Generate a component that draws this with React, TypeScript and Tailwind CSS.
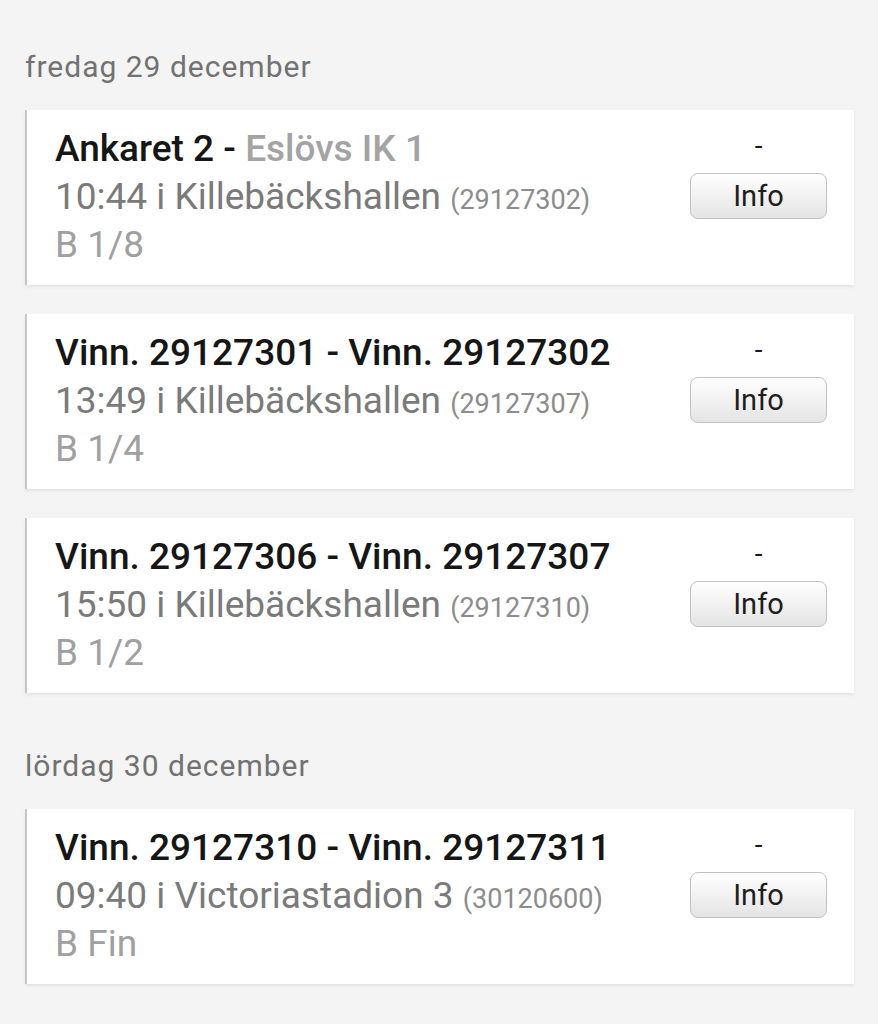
type Match = {
  home: string;
  away: string;
  awayMuted?: boolean;
  time: string;
  venue: string;
  id: string;
  round: string;
};

type Day = {
  label: string;
  matches: Match[];
};

const days: Day[] = [
  {
    label: "fredag 29 december",
    matches: [
      {
        home: "Ankaret 2",
        away: "Eslövs IK 1",
        awayMuted: true,
        time: "10:44",
        venue: "Killebäckshallen",
        id: "29127302",
        round: "B 1/8",
      },
      {
        home: "Vinn. 29127301",
        away: "Vinn. 29127302",
        time: "13:49",
        venue: "Killebäckshallen",
        id: "29127307",
        round: "B 1/4",
      },
      {
        home: "Vinn. 29127306",
        away: "Vinn. 29127307",
        time: "15:50",
        venue: "Killebäckshallen",
        id: "29127310",
        round: "B 1/2",
      },
    ],
  },
  {
    label: "lördag 30 december",
    matches: [
      {
        home: "Vinn. 29127310",
        away: "Vinn. 29127311",
        time: "09:40",
        venue: "Victoriastadion 3",
        id: "30120600",
        round: "B Fin",
      },
    ],
  },
];

function MatchCard({ home, away, awayMuted, time, venue, id, round }: Match) {
  return (
    <div className="flex items-start justify-between bg-white border-l-2 border-[#c6c6c6] shadow-[0_2px_3px_rgba(0,0,0,0.07)] pl-[28px] pr-[27px] pt-[15px] pb-4">
      <div className="flex flex-col text-[37px] whitespace-nowrap">
        <div className="h-12 leading-[48px] font-medium text-[#161616]">
          {home} -{" "}
          <span className={awayMuted ? "text-[#a3a3a3]" : ""}>{away}</span>
        </div>
        <div className="h-12 leading-[48px] text-[#7a7a7a]">
          {time} i {venue}{" "}
          <span className="text-[27px] leading-none text-[#8c8c8c]">({id})</span>
        </div>
        <div className="h-12 leading-[48px] text-[#a0a0a0]">{round}</div>
      </div>
      <div className="flex flex-col items-center w-[137px]">
        <span className="text-[28px] leading-[42px] text-[#1a1a1a]">-</span>
        <button className="mt-[6px] h-[46px] w-[137px] rounded-[8px] border-[1.5px] border-[#c2c2c2] bg-gradient-to-b from-white to-[#e4e4e4] text-[29px] text-[#1e1e1e] leading-none">
          Info
        </button>
      </div>
    </div>
  );
}

export default function App() {
  return (
    <div
      className="min-h-screen bg-[#f4f4f4] pl-[25px] pr-[24px] pt-[47px] pb-10"
      style={{ fontFamily: "Roboto, 'Noto Sans', Arial, sans-serif" }}
    >
      <div className="flex flex-col gap-[53px]">
        {days.map((day) => (
          <section key={day.label}>
            <h2 className="h-10 text-[30px] tracking-[1px] leading-10 text-[#727272] mb-[23px]">
              {day.label}
            </h2>
            <div className="flex flex-col gap-[29px]">
              {day.matches.map((m) => (
                <MatchCard key={m.id} {...m} />
              ))}
            </div>
          </section>
        ))}
      </div>
    </div>
  );
}
